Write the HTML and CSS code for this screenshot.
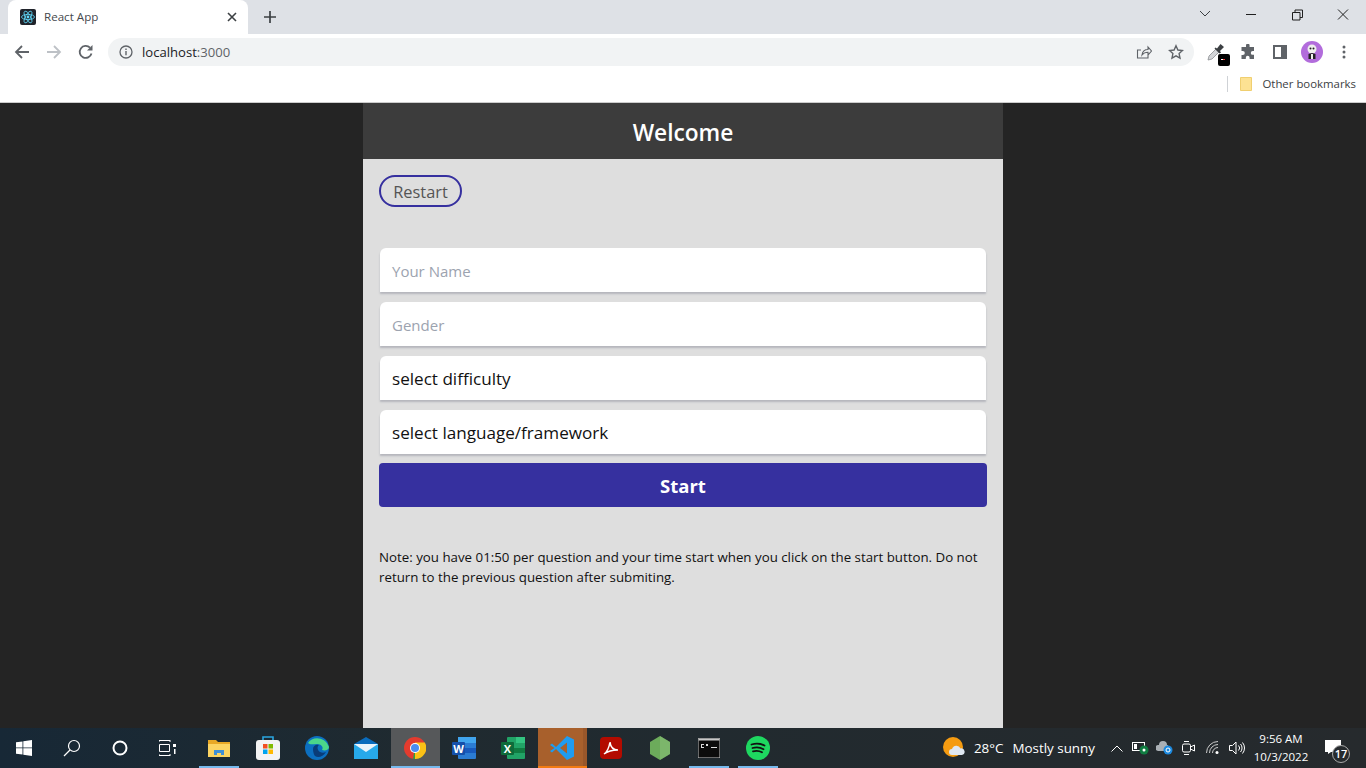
FILE: index.html
```html
<!DOCTYPE html>
<html lang="en">
<head>
    <meta charset="UTF-8">
    <meta name="viewport" content="width=device-width, initial-scale=1.0">
    <title>React App</title>
    <link rel="stylesheet" href="styles.css">
</head>
<body>
    <!-- Browser top -->
    <div class="tabstrip">
        <div class="tab">
            <svg class="favicon" width="16" height="16" viewBox="0 0 16 16">
                <rect width="16" height="16" rx="2" fill="#20232a"/>
                <g fill="none" stroke="#61dafb" stroke-width="0.8">
                    <ellipse cx="8" cy="8" rx="6.5" ry="2.6"/>
                    <ellipse cx="8" cy="8" rx="6.5" ry="2.6" transform="rotate(60 8 8)"/>
                    <ellipse cx="8" cy="8" rx="6.5" ry="2.6" transform="rotate(120 8 8)"/>
                </g>
                <circle cx="8" cy="8" r="1.4" fill="#61dafb"/>
            </svg>
            <span class="tab-title">React App</span>
            <svg class="tab-close" width="10" height="10" viewBox="0 0 10 10"><path d="M1 1l8 8M9 1l-8 8" stroke="#3c4043" stroke-width="1.6"/></svg>
        </div>
        <svg class="new-tab" width="12" height="12" viewBox="0 0 12 12"><path d="M6 0v12M0 6h12" stroke="#3c4043" stroke-width="1.7"/></svg>
        <div class="window-btns">
            <svg width="46" height="30" viewBox="0 0 46 30"><path d="M18 11l5 5 5-5" fill="none" stroke="#3c4043" stroke-width="1"/></svg>
            <svg width="46" height="30" viewBox="0 0 46 30"><path d="M18 14.500h10" stroke="#1f1f1f" stroke-width="1"/></svg>
            <svg width="46" height="30" viewBox="0 0 46 30"><path d="M18.500 12.500h7.500v7.500h-7.500zM21 12.500v-2.500h7.500v7.500h-2.500" fill="none" stroke="#1f1f1f" stroke-width="1"/></svg>
            <svg width="46" height="30" viewBox="0 0 46 30"><path d="M18 9.500l10 10M28 9.500l-10 10" stroke="#1f1f1f" stroke-width="1"/></svg>
        </div>
    </div>

    <div class="toolbar">
        <svg class="nav-icon" width="16" height="16" viewBox="0 0 16 16"><path d="M15 8H2M8 2L2 8l6 6" fill="none" stroke="#5f6368" stroke-width="1.800"/></svg>
        <svg class="nav-icon" width="16" height="16" viewBox="0 0 16 16"><path d="M1 8h13M8 2l6 6-6 6" fill="none" stroke="#bdc1c6" stroke-width="1.800"/></svg>
        <svg class="nav-icon" width="16" height="16" viewBox="0 0 16 16"><path d="M13.500 9.500A6 6 0 1 1 12 3.700" fill="none" stroke="#5f6368" stroke-width="1.800"/><path d="M14.500 1v5.500H9z" fill="#5f6368"/></svg>
        <div class="omnibox">
            <svg width="14" height="14" viewBox="0 0 14 14"><circle cx="7" cy="7" r="6" fill="none" stroke="#5f6368" stroke-width="1.300"/><path d="M7 6v4.200M7 3.500v1.400" stroke="#5f6368" stroke-width="1.400"/></svg>
            <span class="url">localhost<span class="port">:3000</span></span>
            <svg class="share" width="16" height="16" viewBox="0 0 16 16"><path d="M12 9.500v4.500H1.500V6H5M6 11c.5-3.500 3-5.500 6-5.500V3l3.500 4-3.500 4V8.300c-2.500 0-4.500.8-6 2.700z" fill="none" stroke="#5f6368" stroke-width="1.100"/></svg>
            <svg class="star" width="16" height="16" viewBox="0 0 16 16"><path d="M8 1.800l1.900 4.200 4.600.5-3.400 3.100.9 4.500L8 11.800l-4 2.300.9-4.500-3.400-3.100 4.600-.5z" fill="none" stroke="#5f6368" stroke-width="1.400"/></svg>
        </div>
        <div class="ext-icons">
            <div class="ext-slot">
                <div class="dropper">
                    <svg width="18" height="18" viewBox="0 0 18 18"><path d="M1 17l1-4 7-7 3 3-7 7z" fill="#d4d6d9" stroke="#8a8d91" stroke-width="0.800"/><path d="M8.500 4.500l1.500 1 3.500-4.500 3.500 3-4 4 1 1.500-1.500 1-5-5z" fill="#3c4043"/></svg>
                    <svg class="ext-badge" width="12" height="12" viewBox="0 0 12 12"><rect width="12" height="12" rx="2" fill="#000"/><rect x="3" y="5" width="2" height="1" fill="#fff"/><rect x="5" y="5" width="2" height="1" fill="#e33"/></svg>
                </div>
            </div>
            <div class="ext-slot">
                <svg width="16" height="16" viewBox="0 0 16 16"><path d="M6 1.500a1.800 1.800 0 0 1 3.600 0V3H14v4h-1.300a1.900 1.900 0 0 0 0 3.800H14V15H9.600v-1.300a1.900 1.900 0 0 0-3.800 0V15H1.500v-4h1.300a2 2 0 0 0 0-4H1.500V3H6z" fill="#5f6368"/></svg>
            </div>
            <div class="ext-slot">
                <svg width="14" height="14" viewBox="0 0 14 14"><rect x="1" y="1" width="12" height="12" fill="none" stroke="#5f6368" stroke-width="2"/><rect x="8" y="1" width="5" height="12" fill="#5f6368"/></svg>
            </div>
            <div class="ext-slot">
                <svg width="22" height="22" viewBox="0 0 22 22"><circle cx="11" cy="11" r="11" fill="#b26cdc"/><circle cx="11" cy="8" r="4.500" fill="#eee"/><circle cx="9.500" cy="7.500" r="1" fill="#222"/><circle cx="12.500" cy="7.500" r="1" fill="#222"/><path d="M7.500 18v-5l3.500-1 3.500 1v5z" fill="#222"/><path d="M10 13h2v5h-2z" fill="#eee"/></svg>
            </div>
            <div class="ext-slot">
                <svg width="4" height="14" viewBox="0 0 4 14"><circle cx="2" cy="2" r="1.500" fill="#5f6368"/><circle cx="2" cy="7" r="1.500" fill="#5f6368"/><circle cx="2" cy="12" r="1.500" fill="#5f6368"/></svg>
            </div>
        </div>
    </div>

    <div class="bookmarks">
        <span class="bm-sep"></span>
        <svg width="12" height="14" viewBox="0 0 12 14"><path d="M.5.500h11v13H.5z" fill="#fde293" stroke="#f0cf70"/></svg>
        <span class="bm-label">Other bookmarks</span>
    </div>

    <!-- Contenido de la app -->
    <div class="page">
        <div class="card">
            <div class="card-header">Welcome</div>
            <div class="card-body">
                <button class="restart">Restart</button>
                <div class="fields">
                    <div class="field placeholder">Your Name</div>
                    <div class="field placeholder">Gender</div>
                    <div class="field">select difficulty</div>
                    <div class="field">select language/framework</div>
                    <button class="start">Start</button>
                </div>
                <p class="note">Note: you have 01:50 per question and your time start when you click on the start button. Do not return to the previous question after submiting.</p>
            </div>
        </div>
    </div>

    <!-- Barra de tareas -->
    <div class="taskbar">
        <div class="sys-btn">
            <svg width="16" height="16" viewBox="0 0 16 16"><path d="M0 2.300l6.500-.9v6.100H0zM7.300 1.300L16 0v7.500H7.300zM0 8.300h6.500v6.200L0 13.700zM7.300 8.300H16V16l-8.700-1.200z" fill="#fff"/></svg>
        </div>
        <div class="sys-btn">
            <svg width="18" height="18" viewBox="0 0 18 18"><circle cx="11" cy="7" r="5.500" fill="none" stroke="#fff" stroke-width="1.200"/><path d="M7 11l-6 6" stroke="#fff" stroke-width="1.300"/></svg>
        </div>
        <div class="sys-btn">
            <svg width="16" height="16" viewBox="0 0 16 16"><circle cx="8" cy="8" r="6.500" fill="none" stroke="#fff" stroke-width="2"/></svg>
        </div>
        <div class="sys-btn">
            <svg width="18" height="16" viewBox="0 0 18 16"><path d="M0 .500h11M0 15.500h11M.5 4.500h10v7H.5z" fill="none" stroke="#fff"/><path d="M11 0v2M0 0v2M11 14v2M0 14v2" stroke="#fff"/><rect x="14" y="4" width="3" height="3" fill="#fff"/><rect x="15" y="9" width="1.500" height="5" fill="#fff"/></svg>
        </div>

        <div class="apps">
            <div class="app running">
                <svg width="22" height="18" viewBox="0 0 22 18"><path d="M0 1h8l2 2h12v14H0z" fill="#e8a825"/><path d="M0 5h22v13H0z" fill="#fcd462"/><path d="M6 16v-5h10v5h-3v-2H9v2z" fill="#3f8fd6"/></svg>
            </div>
            <div class="app">
                <svg width="24" height="24" viewBox="0 0 24 24"><path d="M7 5V1h10v4" fill="none" stroke="#2aa5e0" stroke-width="1.600"/><rect y="4" width="24" height="20" rx="3" fill="#f3f3f3"/><rect x="7" y="8" width="4.500" height="4.500" fill="#f25022"/><rect x="12.500" y="8" width="4.500" height="4.500" fill="#7fba00"/><rect x="7" y="13.500" width="4.500" height="4.500" fill="#00a4ef"/><rect x="12.500" y="13.500" width="4.500" height="4.500" fill="#ffb900"/></svg>
            </div>
            <div class="app">
                <svg width="24" height="24" viewBox="0 0 24 24"><circle cx="12" cy="12" r="12" fill="#0c6fc0"/><path d="M3 7C7 0 20 0 24 11c0 3-4 4-7 3 2-3-1-6-5-6-4 0-7 1-9-1z" fill="#4bd68a"/><path d="M8 13c0-3 3-5 6-4-2 1-2 5 1 7 2 1 4 1 6 0-3 5-8 6-11 4-1-1-2-4-2-7z" fill="#0a3c78"/></svg>
            </div>
            <div class="app">
                <svg width="24" height="22" viewBox="0 0 24 22"><path d="M12 0l12 7v15H0V7z" fill="#0a6cbd"/><path d="M0 7h24v15H0z" fill="#27a9ea"/><path d="M0 7h24l-12 8z" fill="#eaf4fb"/></svg>
            </div>
            <div class="app active">
                <svg width="22" height="22" viewBox="0 0 22 22"><circle cx="11" cy="11" r="11" fill="#e33b2e"/><path d="M11 11l9.500 5.500A11 11 0 0 1 9 21.800z" fill="#2f9e44"/><path d="M11 5.500h9.800A11 11 0 0 1 11 22z" fill="#fbc116"/><circle cx="11" cy="11" r="5" fill="#fff"/><circle cx="11" cy="11" r="4" fill="#4a8df0"/></svg>
            </div>
            <div class="app">
                <svg width="24" height="22" viewBox="0 0 24 22"><rect x="6" y="0" width="18" height="22" rx="1" fill="#2b7cd3"/><rect x="6" y="0" width="18" height="6" fill="#41a5ee"/><rect x="6" y="11" width="18" height="5" fill="#185abd"/><rect x="0" y="5" width="13" height="13" rx="1" fill="#1550ab"/><text x="6.500" y="15.500" class="app-letter">W</text></svg>
            </div>
            <div class="app">
                <svg width="24" height="22" viewBox="0 0 24 22"><rect x="6" y="0" width="18" height="22" rx="1" fill="#21a366"/><rect x="15" y="0" width="9" height="6" fill="#33c481"/><rect x="6" y="11" width="18" height="5" fill="#107c41"/><rect x="0" y="5" width="13" height="13" rx="1" fill="#0e6a3a"/><text x="6.500" y="15.500" class="app-letter">X</text></svg>
            </div>
            <div class="app code">
                <svg width="24" height="24" viewBox="0 0 24 24"><path d="M17 0l7 3.500v17L17 24 6 13l-4 3.500-2-1.500 4.500-3L0 9l2-1.500L6 11z" fill="#1f9cf0"/><path d="M17 6.500L10 12l7 5.500z" fill="#a8602c"/></svg>
            </div>
            <div class="app">
                <svg width="22" height="22" viewBox="0 0 22 22"><rect width="22" height="22" rx="4" fill="#b30b00"/><path d="M4 17c3-2 5-6 6-12 .5 5 3 8 8 8-5 0-10 1-14 4z" fill="none" stroke="#fff" stroke-width="1.500"/></svg>
            </div>
            <div class="app">
                <svg width="22" height="24" viewBox="0 0 22 24"><path d="M11 0l10 6v12l-10 6-10-6V6z" fill="#6cab5b"/><path d="M11 0l10 6v12l-10 6z" fill="#8cc27c" opacity="0.500"/></svg>
            </div>
            <div class="app running">
                <svg width="22" height="20" viewBox="0 0 22 20"><rect width="22" height="20" fill="#0c0c0c" stroke="#c8c8c8"/><rect x="0.500" y="0.500" width="21" height="2" fill="#c8c8c8"/><path d="M3 6h3v1H4v2h2v1H3zM8 6h2v2H8zM13 9h6v1h-6z" fill="#ddd"/></svg>
            </div>
            <div class="app running">
                <svg width="24" height="24" viewBox="0 0 24 24"><circle cx="12" cy="12" r="12" fill="#1ed760"/><path d="M5.500 8.500c4.500-1.300 9-1 13 1M6.500 12c3.800-1 7.500-.8 11 1.200M7 15.300c3.200-.8 6.300-.6 9 1" fill="none" stroke="#111" stroke-width="1.800" stroke-linecap="round"/></svg>
            </div>
        </div>

        <div class="tray">
            <svg class="weather-icon" width="22" height="22" viewBox="0 0 22 22"><circle cx="10" cy="10" r="10" fill="#f59b11"/><path d="M9 18a3 3 0 0 1 0-6 4.500 4.500 0 0 1 8.500-.5A3.300 3.300 0 0 1 19 18z" fill="#dfe7f2"/></svg>
            <span class="temp">28°C</span>
            <span class="weather">Mostly sunny</span>
            <svg class="chevron" width="12" height="7" viewBox="0 0 12 7"><path d="M.5 6.500L6 1l5.500 5.500" fill="none" stroke="#fff"/></svg>
            <div class="tray-slot">
                <svg width="18" height="14" viewBox="0 0 18 14"><rect x="0.500" y="1.500" width="12" height="8" fill="none" stroke="#fff"/><rect x="2" y="3" width="3" height="5" fill="#fff"/><circle cx="12" cy="9" r="4.500" fill="#107c41"/><circle cx="12" cy="9" r="1.500" fill="#fff"/></svg>
            </div>
            <div class="tray-slot">
                <svg width="18" height="14" viewBox="0 0 18 14"><path d="M2 10a3 3 0 0 1 1-6 4 4 0 0 1 8 0h1v6z" fill="#aab0b5"/><circle cx="12" cy="9" r="4.500" fill="#1c8ae0"/><circle cx="12" cy="9" r="2" fill="none" stroke="#fff"/></svg>
            </div>
            <div class="tray-slot">
                <svg width="16" height="16" viewBox="0 0 16 16"><rect x="1.500" y="4" width="8" height="8" rx="1.500" fill="none" stroke="#fff"/><path d="M9.500 7l4-2v6l-4-2M3 1.500h5M3 14.500h5" fill="none" stroke="#fff"/></svg>
            </div>
            <div class="tray-slot">
                <svg width="14" height="14" viewBox="0 0 14 14"><path d="M.5 12a11.500 11.500 0 0 1 11.500-11.500M3.500 12A8.500 8.500 0 0 1 12 3.500M6.500 12A5.500 5.500 0 0 1 12 6.500" fill="none" stroke="#ccc"/><circle cx="11" cy="11.500" r="1.500" fill="#fff"/></svg>
            </div>
            <div class="tray-slot">
                <svg width="16" height="14" viewBox="0 0 16 14"><path d="M.5 4.500h3L7 1v12L3.500 9.500h-3zM9.500 4.500a3.500 3.500 0 0 1 0 5M11.500 3a6 6 0 0 1 0 8M13.500 1.500a8.500 8.500 0 0 1 0 11" fill="none" stroke="#fff"/></svg>
            </div>
            <div class="clock">
                <div>9:56 AM</div>
                <div>10/3/2022</div>
            </div>
            <div class="notif">
                <svg class="notif-icon" width="16" height="14" viewBox="0 0 16 14"><path d="M0 0h16v12H6l-3 2v-2H0z" fill="#fff"/></svg>
                <span class="notif-count">17</span>
            </div>
        </div>
    </div>
</body>
</html>
```

FILE: styles.css
```css
* {
    box-sizing: border-box;
    margin: 0;
    padding: 0;
}

body {
    width: 1366px;
    height: 768px;
    overflow: hidden;
    display: flex;
    flex-direction: column;
    font-family: "Open Sans", "Noto Sans", sans-serif;
    background-color: #242424;
}

svg {
    display: block;
    flex-shrink: 0;
}

/* Browser top */
.tabstrip {
    height: 34px;
    background-color: #dee1e6;
    display: flex;
    align-items: flex-end;
    padding-left: 8px;
}

.tab {
    width: 240px;
    height: 34px;
    background-color: #fff;
    border-radius: 8px 8px 0 0;
    display: flex;
    align-items: center;
    padding: 0 12px;
}

.favicon {
    margin-right: 8px;
}

.tab-title {
    flex: 1;
    margin-bottom: 2px;
    font-size: 11.600px;
    color: #45494d;
}

.tab-close {
    margin-right: -1px;
}

.new-tab {
    margin: 0 0 11px 16px;
}

.window-btns {
    margin-left: auto;
    align-self: flex-start;
    display: flex;
}

.toolbar {
    height: 36px;
    background-color: #fff;
    display: flex;
    align-items: center;
    padding-left: 14px;
}

.nav-icon {
    margin-right: 16px;
}

.omnibox {
    width: 1086px;
    height: 28px;
    margin-left: -2px;
    border-radius: 14px;
    background-color: #f1f3f4;
    display: flex;
    align-items: center;
    padding: 0 10px 0 11px;
}

.url {
    margin-left: 9px;
    flex: 1;
    font-size: 13.100px;
    color: #202124;
}

.port {
    color: #5f6368;
}

.share {
    margin-right: 16px;
}

.ext-icons {
    display: flex;
    margin-left: 6px;
}

.ext-slot {
    width: 32px;
    height: 36px;
    display: flex;
    align-items: center;
    justify-content: center;
}

.dropper {
    position: relative;
    width: 18px;
    height: 18px;
}

.ext-badge {
    position: absolute;
    left: 11px;
    top: 11px;
}

.bookmarks {
    height: 33px;
    padding: 0 10px 4px 0;
    background-color: #fff;
    border-bottom: 1px solid #ccc;
    display: flex;
    align-items: center;
    justify-content: flex-end;
}

.bm-sep {
    width: 1px;
    height: 16px;
    background-color: #cfd2d6;
    margin-right: 12px;
}

.bm-label {
    margin: 0 0 2px 10px;
    font-size: 11.400px;
    color: #3c4043;
}

/* App */
.page {
    flex: 1;
    min-height: 0;
    display: flex;
    justify-content: center;
    background-color: #242424;
}

.card {
    width: 640px;
    background-color: #dedede;
    display: flex;
    flex-direction: column;
}

.card-header {
    height: 56px;
    background-color: #3c3c3c;
    color: #fff;
    font-size: 22.700px;
    font-weight: 600;
    line-height: 60px;
    text-align: center;
}

.card-body {
    padding: 16px;
}

.restart {
    display: block;
    width: 83px;
    height: 32px;
    border: 2px solid #36309f;
    border-radius: 16px;
    background: transparent;
    color: #555;
    font-family: inherit;
    font-size: 16.400px;
}

.fields {
    margin-top: 41px;
    display: flex;
    flex-direction: column;
}

.field {
    height: 44px;
    margin: 0 1px 10px;
    padding-left: 12px;
    background-color: #fff;
    border-radius: 6px 6px 0 0;
    box-shadow: 0 2px 2px rgba(60, 64, 90, 0.25);
    color: #111;
    font-size: 17.100px;
    line-height: 45px;
}

.field.placeholder {
    color: #9ca3af;
    font-size: 15px;
    line-height: 46px;
}

.start {
    height: 44px;
    margin-top: -1px;
    border: none;
    border-radius: 4px;
    background-color: #36309f;
    color: #fff;
    font-family: inherit;
    font-size: 18.500px;
    font-weight: 700;
}

.note {
    margin-top: 40px;
    font-size: 13.300px;
    line-height: 20px;
    color: #111;
}

/* Barra de tareas */
.taskbar {
    height: 40px;
    background: linear-gradient(90deg, #172836 0%, #1f2a30 30%, #262a2d 100%);
    display: flex;
    align-items: center;
    color: #fff;
}

.sys-btn {
    width: 48px;
    height: 40px;
    display: flex;
    align-items: center;
    justify-content: center;
}

.apps {
    display: flex;
    margin-left: 3px;
}

.app {
    position: relative;
    width: 49px;
    height: 40px;
    padding-right: 1px;
    display: flex;
    align-items: center;
    justify-content: center;
}

.app.running::after {
    content: "";
    position: absolute;
    left: 4px;
    right: 5px;
    bottom: 0;
    height: 2px;
    background-color: #76b9ed;
}

.app.active {
    background-color: #56585a;
    box-shadow: inset 0 -2px #76b9ed;
}

.app.code {
    background-color: #a8602c;
    box-shadow: inset 0 -2px #f27a12, inset -4px 0 #99572a;
}

.app-letter {
    fill: #fff;
    font-size: 11px;
    font-weight: 700;
    text-anchor: middle;
}

.tray {
    margin-left: auto;
    padding-right: 13px;
    display: flex;
    align-items: center;
    height: 40px;
    font-size: 13.400px;
}

.weather-icon {
    margin-right: 9px;
}

.temp {
    margin-right: 9px;
}

.weather {
    margin-right: 16px;
}

.chevron {
    margin-right: 6px;
}

.tray-slot {
    width: 24px;
    height: 40px;
    display: flex;
    align-items: center;
    justify-content: center;
}

.clock {
    width: 64px;
    text-align: center;
    font-size: 11.500px;
    line-height: 18px;
}

.notif {
    position: relative;
    width: 40px;
    height: 40px;
    display: flex;
    justify-content: center;
}

.notif-icon {
    margin-top: 12px;
}

.notif-count {
    position: absolute;
    left: 19px;
    top: 17px;
    width: 18px;
    height: 18px;
    border: 1px solid #aaa;
    border-radius: 50%;
    background-color: #262a2d;
    font-size: 11px;
    font-weight: 600;
    line-height: 16px;
    text-align: center;
}
```
